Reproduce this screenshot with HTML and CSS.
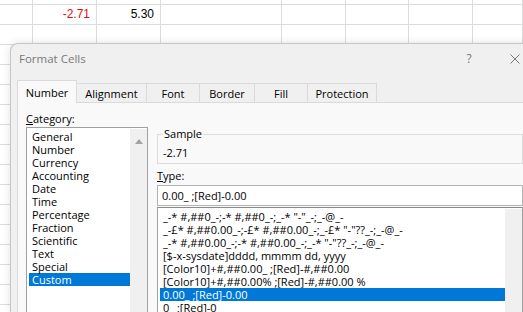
FILE: index.html
```html
<!doctype html>
<html lang="en">
<head>
    <meta charset="utf-8">
    <meta name="viewport" content="width=device-width, initial-scale=1.0">
    <title>Format Cells</title>
    <link rel="stylesheet" href="styles.css">
</head>

<body>
    <div class="sheet" id="sheet"></div>

    <div class="dialog">
        <div class="titlebar">
            <span class="title">Format Cells</span>
            <span class="caption-btn">?</span>
            <span class="caption-btn">
                <svg width="10" height="10" viewBox="0 0 10 10"><path d="M0.5 0.5 L9.5 9.5 M9.5 0.5 L0.5 9.5" stroke="#7a7a7a" stroke-width="1" fill="none"/></svg>
            </span>
        </div>
        <div class="tabs">
            <div class="tab active w-number">Number</div>
            <div class="tab w-align">Alignment</div>
            <div class="tab w-font">Font</div>
            <div class="tab w-border">Border</div>
            <div class="tab w-fill">Fill</div>
            <div class="tab w-prot">Protection</div>
        </div>
        <div class="page">
            <div class="left-col">
                <div class="label"><u>C</u>ategory:</div>
                <div class="listbox category">
                    <ul class="items">
                        <li>General</li>
                        <li>Number</li>
                        <li>Currency</li>
                        <li>Accounting</li>
                        <li>Date</li>
                        <li>Time</li>
                        <li>Percentage</li>
                        <li>Fraction</li>
                        <li>Scientific</li>
                        <li>Text</li>
                        <li>Special</li>
                        <li class="selected">Custom</li>
                    </ul>
                    <div class="scrollbar"><span class="arrow-up"></span></div>
                </div>
            </div>
            <div class="right-col">
                <fieldset class="sample">
                    <legend>Sample</legend>
                    <div class="sample-value">-2.71</div>
                </fieldset>
                <div class="label"><u>T</u>ype:</div>
                <div class="type-input">0.00_ ;[Red]-0.00</div>
                <div class="listbox types">
                    <ul class="items">
                        <li>_-* #,##0_-;-* #,##0_-;_-* "-"_-;_-@_-</li>
                        <li>_-£* #,##0.00_-;-£* #,##0.00_-;_-£* "-"??_-;_-@_-</li>
                        <li>_-* #,##0.00_-;-* #,##0.00_-;_-* "-"??_-;_-@_-</li>
                        <li>[$-x-sysdate]dddd, mmmm dd, yyyy</li>
                        <li>[Color10]+#,##0.00_ ;[Red]-#,##0.00</li>
                        <li>[Color10]+#,##0.00% ;[Red]-#,##0.00 %</li>
                        <li class="selected">0.00_ ;[Red]-0.00</li>
                        <li>0_ ;[Red]-0</li>
                    </ul>
                    <div class="scrollbar"></div>
                </div>
            </div>
        </div>
    </div>

    <script>
        // 表格背景：空白儲存格，只有第二列有數值
        const sheet = document.getElementById('sheet');
        const values = {
            '1-1': { text: '-2.71', cls: 'neg' },
            '1-2': { text: '5.30', cls: '' }
        };
        for (let r = 0; r < 16; r++) {
            for (let c = 0; c < 8; c++) {
                const cell = document.createElement('div');
                cell.className = 'cell';
                const v = values[r + '-' + c];
                if (v) {
                    cell.textContent = v.text;
                    if (v.cls) cell.classList.add(v.cls);
                }
                sheet.appendChild(cell);
            }
        }
    </script>
</body>
</html>
```

FILE: styles.css
```css
* {
    box-sizing: border-box;
}
html, body {
    height: 100%;
}
body {
    margin: 0;
    background: #fff;
    overflow: hidden;
    font-family: "Open Sans", "Noto Sans", sans-serif;
}
.sheet {
    display: grid;
    grid-template-columns: 33px 64px 64px 121px 64px 63px 64px 1fr;
    grid-template-rows: 5px;
    grid-auto-rows: 20px;
    height: 312px;
    overflow: hidden;
}
.cell {
    border-right: 1px solid #dcdcdc;
    border-bottom: 1px solid #dcdcdc;
    font-family: "Liberation Sans", Arial, sans-serif;
    font-size: 12px;
    line-height: 19px;
    text-align: right;
    padding-right: 6px;
    color: #000;
    overflow: hidden;
}
.cell.neg {
    color: #e01010;
}
.dialog {
    position: absolute;
    left: 10px;
    top: 43px;
    width: 529px;
    height: 269px;
    background: #f0f0f0;
    border: 1px solid #c6c6c6;
    border-bottom: none;
    border-radius: 8px 8px 0 0;
    box-shadow: 0 0 8px rgba(0,0,0,0.12);
    display: flex;
    flex-direction: column;
    font-size: 11px;
    color: #000;
    overflow: hidden;
}
.titlebar {
    height: 29px;
    display: flex;
    align-items: center;
    padding-left: 8px;
    color: #7a7a7a;
}
.title {
    flex: 1;
    font-size: 11.5px;
}
.caption-btn {
    width: 46px;
    height: 29px;
    display: flex;
    align-items: center;
    justify-content: center;
    font-size: 12px;
}
.tabs {
    height: 29px;
    display: flex;
    align-items: flex-end;
    padding-left: 6px;
}
.tab {
    height: 19px;
    display: flex;
    align-items: center;
    justify-content: center;
    border-top: 1px solid #dadada;
    border-right: 1px solid #dadada;
    background: #f0f0f0;
}
.tab.active {
    height: 23px;
    margin-bottom: -1px;
    padding-top: 1px;
    border-left: 1px solid #dadada;
    background: #f9f9f9;
    position: relative;
    z-index: 1;
}
.w-number { width: 60px; }
.w-align { width: 70px; }
.w-font { width: 53px; }
.w-border { width: 55px; }
.w-fill { width: 53px; }
.w-prot { width: 69px; }
.page {
    flex: 1;
    margin: 0 6px;
    background: #f9f9f9;
    border: 1px solid #dadada;
    border-bottom: none;
    padding: 8px 8px 0 8px;
    display: flex;
    gap: 9px;
    min-height: 0;
}
.left-col {
    width: 122px;
    display: flex;
    flex-direction: column;
}
.right-col {
    flex: 1;
    display: flex;
    flex-direction: column;
    min-width: 0;
}
.label {
    line-height: 15px;
}
.listbox {
    flex: 1;
    display: flex;
    background: #fff;
    border: 1px solid #a0a0a0;
    border-bottom: none;
    padding: 2px 0 0 1px;
    min-height: 0;
    overflow: hidden;
}
.listbox.category {
    margin-top: 1px;
}
.listbox.types {
    margin-top: 1px;
    border-top-color: #8a8a8a;
}
.items {
    list-style: none;
    margin: 0;
    padding: 0;
    flex: 1;
    min-width: 0;
}
.items li {
    line-height: 13px;
    height: 13px;
    padding-left: 3px;
    white-space: nowrap;
    margin-left: 1px;
}
.items li.selected {
    background: #0078d7;
    color: #fff;
}
.scrollbar {
    width: 17px;
    background: #f0f0f0;
    margin-top: -1px;
    display: flex;
    justify-content: center;
    padding-top: 10px;
}
.arrow-up {
    width: 0;
    height: 0;
    border-left: 4px solid transparent;
    border-right: 4px solid transparent;
    border-bottom: 5px solid #a3a3a3;
}
.sample {
    margin: 16px 0 0 0;
    padding: 0 0 3px 5px;
    border: 1px solid #dcdcdc;
    min-width: 0;
}
.sample legend {
    padding: 0 1px;
    line-height: 14px;
}
.sample-value {
    line-height: 14px;
    margin-top: 5px;
}
.right-col .label {
    margin-top: 4px;
}
.type-input {
    margin-top: 2px;
    height: 21px;
    line-height: 19px;
    background: #fff;
    border: 1px solid #b4b4b4;
    padding-left: 4px;
    white-space: nowrap;
}
```
